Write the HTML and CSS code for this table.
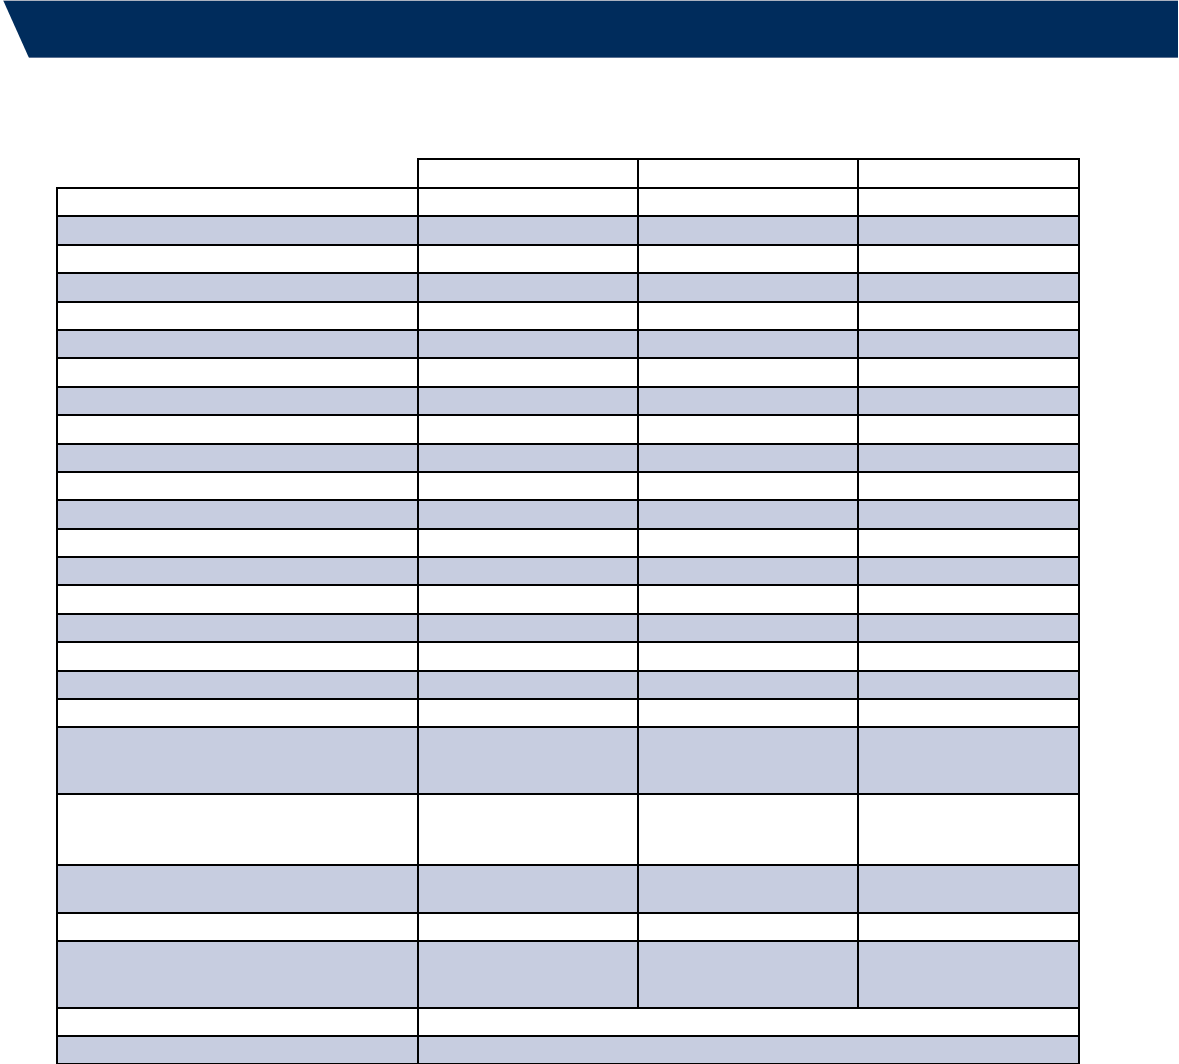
FILE: index.html
```html
<!DOCTYPE html>
<html>
<head>
<meta charset="utf-8">
<link rel="stylesheet" href="styles.css">
</head>
<body>
<div class="banner"></div>
<table class="grid">
  <colgroup><col class="c1"><col class="c2"><col class="c3"><col class="c4"></colgroup>
  <tr class="head"><td class="blank"></td><td></td><td></td><td></td></tr>
  <tr class="r"><td></td><td></td><td></td><td></td></tr>
  <tr class="r alt"><td></td><td></td><td></td><td></td></tr>
  <tr class="r"><td></td><td></td><td></td><td></td></tr>
  <tr class="r alt"><td></td><td></td><td></td><td></td></tr>
  <tr class="r"><td></td><td></td><td></td><td></td></tr>
  <tr class="r alt"><td></td><td></td><td></td><td></td></tr>
  <tr class="r"><td></td><td></td><td></td><td></td></tr>
  <tr class="r alt"><td></td><td></td><td></td><td></td></tr>
  <tr class="r"><td></td><td></td><td></td><td></td></tr>
  <tr class="r alt"><td></td><td></td><td></td><td></td></tr>
  <tr class="r"><td></td><td></td><td></td><td></td></tr>
  <tr class="r alt"><td></td><td></td><td></td><td></td></tr>
  <tr class="r"><td></td><td></td><td></td><td></td></tr>
  <tr class="r alt"><td></td><td></td><td></td><td></td></tr>
  <tr class="r"><td></td><td></td><td></td><td></td></tr>
  <tr class="r alt"><td></td><td></td><td></td><td></td></tr>
  <tr class="r"><td></td><td></td><td></td><td></td></tr>
  <tr class="r alt"><td></td><td></td><td></td><td></td></tr>
  <tr class="r"><td></td><td></td><td></td><td></td></tr>
  <tr class="h67 alt"><td></td><td></td><td></td><td></td></tr>
  <tr class="h71"><td></td><td></td><td></td><td></td></tr>
  <tr class="h48 alt"><td></td><td></td><td></td><td></td></tr>
  <tr class="h28"><td></td><td></td><td></td><td></td></tr>
  <tr class="h67 alt"><td></td><td></td><td></td><td></td></tr>
  <tr class="h28"><td></td><td colspan="3"></td></tr>
  <tr class="h28 alt"><td></td><td colspan="3"></td></tr>
</table>
</body>
</html>
```

FILE: styles.css
```css
html, body {
  margin: 0;
  padding: 0;
  background: #ffffff;
  font-family: "Liberation Sans", Arial, sans-serif;
}

.banner {
  height: 58px;
  width: 1178px;
  background: linear-gradient(to bottom, #aab2c0 0, #aab2c0 1px, #002c5c 1px, #002c5c 57px, #5b7192 57px, #5b7192 58px);
  clip-path: polygon(3px 0, 100% 0, 100% 100%, 29px 100%);
}

.grid {
  margin: 100px 0 0 56px;
  border-collapse: collapse;
  table-layout: fixed;
  width: 1024px;
}

.c1 { width: 361px; }
.c2 { width: 220px; }
.c3 { width: 220px; }
.c4 { width: 221px; }

.grid td {
  border: 2px solid #000000;
  padding: 0;
  background: #ffffff;
}

.grid td.blank {
  border-top: none;
  border-left: none;
}

.grid tr.alt td {
  background: #c7cde0;
}

.head { height: 29px; }
.r { height: 28.4px; }
.h67 { height: 67px; }
.h71 { height: 71px; }
.h48 { height: 48px; }
.h28 { height: 28px; }
```
